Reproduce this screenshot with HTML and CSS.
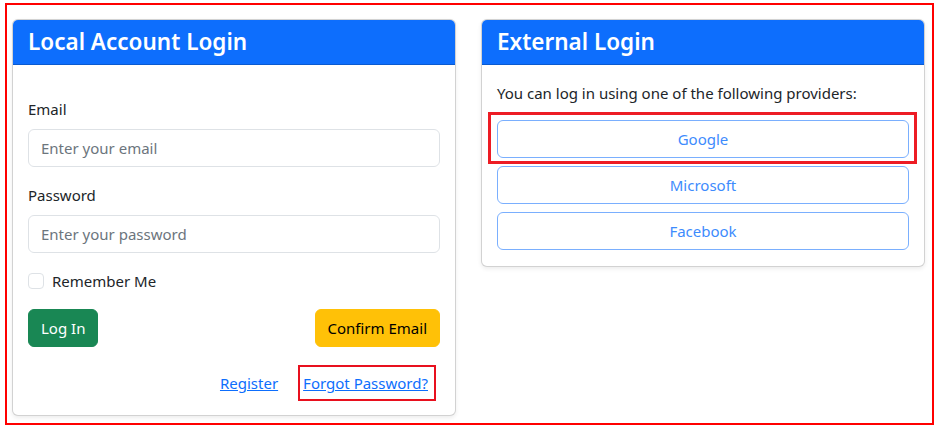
FILE: index.html
```html
<!DOCTYPE html>
<html lang="en">
<head>
<meta charset="utf-8">
<title>Login</title>
<link rel="stylesheet" href="styles.css">
</head>
<body>
<div class="frame">
  <div class="grid">
    <section class="card">
      <div class="card-header"><h4 class="card-title">Local Account Login</h4></div>
      <div class="card-body local-body">
        <form class="login-form">
          <div class="field">
            <label class="field-label" for="email">Email</label>
            <input class="input" id="email" type="email" placeholder="Enter your email">
          </div>
          <div class="field">
            <label class="field-label" for="password">Password</label>
            <input class="input" id="password" type="password" placeholder="Enter your password">
          </div>
          <div class="check-row">
            <span class="checkbox"></span>
            <span class="check-label">Remember Me</span>
          </div>
          <div class="actions">
            <button type="button" class="btn btn-success">Log In</button>
            <button type="button" class="btn btn-warning">Confirm Email</button>
          </div>
          <div class="links">
            <a class="link" href="#">Register</a>
            <span class="marked marked-link"><a class="link" href="#">Forgot Password?</a></span>
          </div>
        </form>
      </div>
    </section>
    <section class="card">
      <div class="card-header"><h4 class="card-title">External Login</h4></div>
      <div class="card-body">
        <p class="intro">You can log in using one of the following providers:</p>
        <div class="providers">
          <div class="marked marked-btn"><button type="button" class="btn btn-outline">Google</button></div>
          <button type="button" class="btn btn-outline">Microsoft</button>
          <button type="button" class="btn btn-outline">Facebook</button>
        </div>
      </div>
    </section>
  </div>
</div>
</body>
</html>
```
FILE: styles.css
```css
* { box-sizing: border-box; }
html, body { margin: 0; padding: 0; background: #fff; }
body {
  font-family: "Noto Sans", "Open Sans", sans-serif;
  font-size: 15px;
  line-height: 24px;
  color: #212529;
}
.frame {
  margin: 3px 0 0 5px;
  width: 929px;
  height: 422px;
  border: 2px solid #ff0000;
  padding: 14px 0 0 5px;
}
.grid {
  display: grid;
  grid-template-columns: 444px 444px;
  column-gap: 25px;
  align-items: start;
}
.card {
  border: 1px solid rgba(0,0,0,.175);
  border-radius: 6px;
  box-shadow: 0 2px 4px rgba(0,0,0,.075);
  background: #fff;
  overflow: hidden;
}
.card-header {
  background: #0d6efd;
  padding: 8px 15px;
  border-bottom: 1px solid rgba(0,0,0,.175);
}
.card-title {
  margin: 0;
  color: #fff;
  font-size: 22.5px;
  line-height: 28px;
  font-weight: 600;
}
.card-body { padding: 16px 15px; }
.local-body { padding: 32px 15px 20px; }
.field { margin-bottom: 16px; }
.field-label { display: block; margin-bottom: 8px; }
.input {
  display: block;
  width: 100%;
  height: 38px;
  padding: 6px 12px;
  border: 1px solid #dee2e6;
  border-radius: 6px;
  font: inherit;
  color: #212529;
  background: #fff;
}
.input::placeholder { color: #6c757d; }
.check-row {
  display: flex;
  align-items: center;
  gap: 8px;
  margin-bottom: 16px;
}
.checkbox {
  width: 16px;
  height: 16px;
  border: 1px solid #dee2e6;
  border-radius: 4px;
  background: #fff;
}
.actions {
  display: flex;
  justify-content: space-between;
}
.btn {
  display: inline-block;
  height: 38px;
  padding: 6px 12px;
  border: 1px solid transparent;
  border-radius: 6px;
  font: inherit;
  line-height: 24px;
  cursor: pointer;
  text-align: center;
}
.btn-success { background: #198754; border-color: #198754; color: #fff; }
.btn-warning { background: #ffc107; border-color: #ffc107; color: #000; }
.links {
  display: flex;
  justify-content: flex-end;
  gap: 25px;
  margin-top: 24px;
  padding-right: 12px;
}
.link { color: #0d6efd; text-decoration: underline; }
.marked { position: relative; }
.marked::after {
  content: "";
  position: absolute;
  pointer-events: none;
}
.marked-link::after {
  top: -6px; bottom: -6px; left: -5px; right: -8px;
  border: 2px solid #e8101e;
}
.marked-btn::after {
  top: -8px; bottom: -6px; left: -9px; right: -8px;
  border: 3px solid #ed1c24;
}
.intro { margin: 0 0 15px; }
.providers {
  display: flex;
  flex-direction: column;
  gap: 8px;
}
.btn-outline {
  width: 100%;
  background: #fff;
  border-color: #7aaffe;
  color: #3d8bfd;
}
```
